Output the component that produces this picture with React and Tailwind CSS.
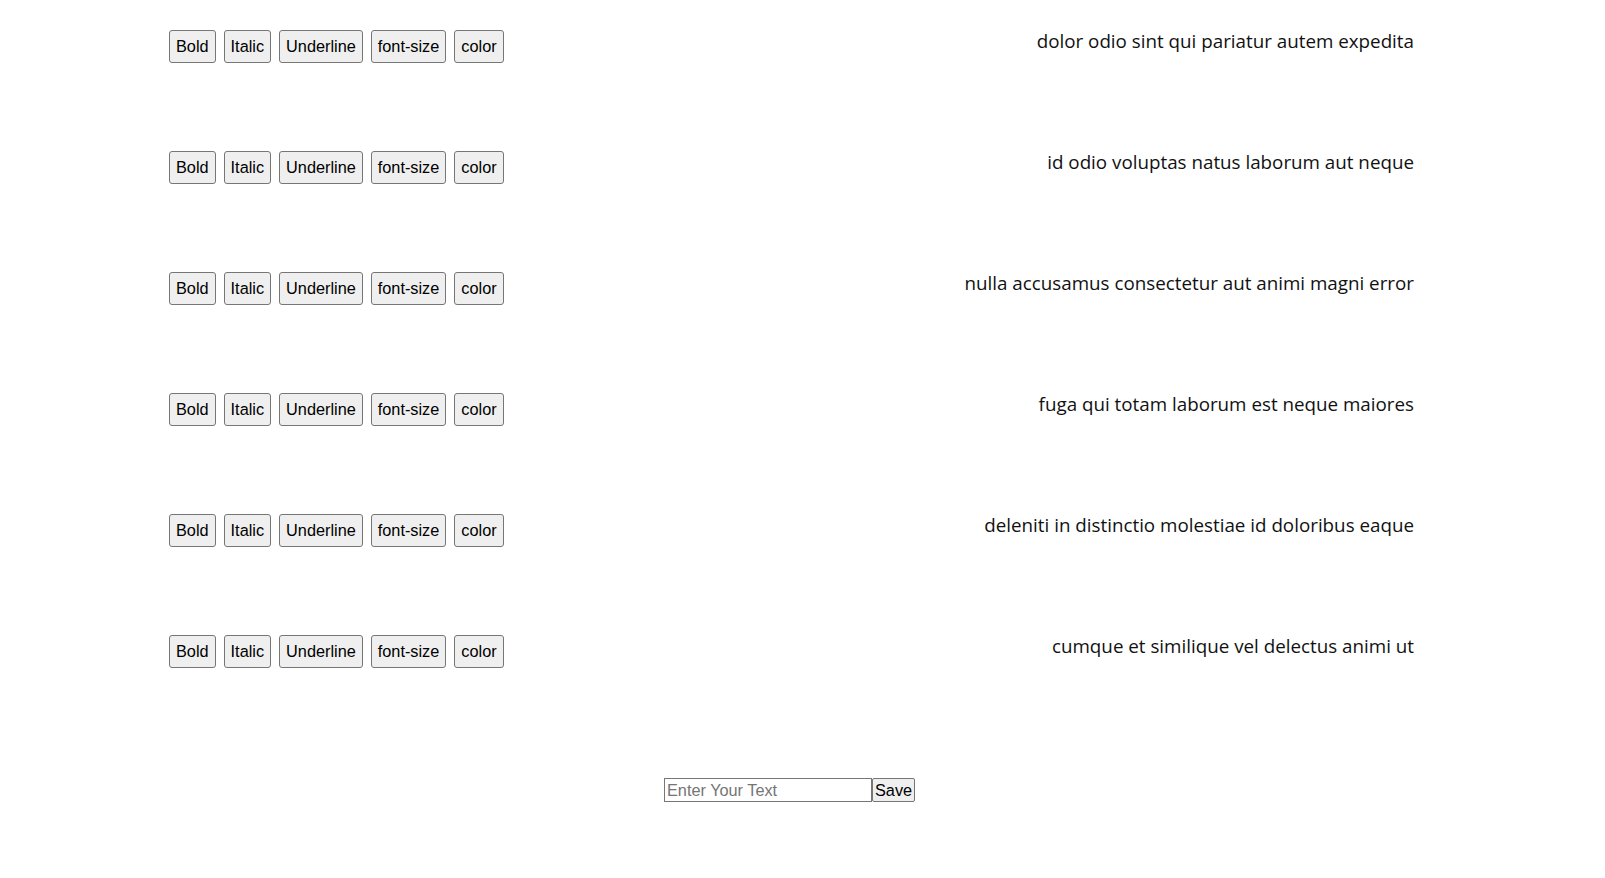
import React from "react";

const rows = [
  "dolor odio sint qui pariatur autem expedita",
  "id odio voluptas natus laborum aut neque",
  "nulla accusamus consectetur aut animi magni error",
  "fuga qui totam laborum est neque maiores",
  "deleniti in distinctio molestiae id doloribus eaque",
  "cumque et similique vel delectus animi ut",
];

const tools = ["Bold", "Italic", "Underline", "font-size", "color"];

export default function App() {
  return (
    <div className="w-[1605px] min-h-[878px] bg-white pt-[30px]">
      {rows.map((text, i) => (
        <div key={i} className="flex justify-between items-start h-[121px] pl-[169px] pr-[191px]">
          <div className="flex gap-[8px]">
            {tools.map((t) => (
              <button
                key={t}
                className="h-[33px] px-[6px] bg-[#efefef] border border-[#767676] rounded-[3px] text-[16.3px] leading-[19px] text-black"
                style={{ fontFamily: '"Liberation Sans", Arial, sans-serif' }}
              >
                {t}
              </button>
            ))}
          </div>
          <p
            className="-mt-[2px] text-[18.8px] leading-[26px] text-[#111]"
            style={{ fontFamily: '"Open Sans", "Noto Sans", sans-serif' }}
          >
            {text}
          </p>
        </div>
      ))}
      <div className="flex pl-[664px] pt-[22px]" style={{ fontFamily: '"Liberation Sans", Arial, sans-serif' }}>
        <input
          placeholder="Enter Your Text"
          className="w-[208px] h-[24px] border border-[#767676] px-[2px] text-[16.3px] text-black placeholder:text-[#757575] outline-none"
        />
        <button className="h-[24px] px-[2px] bg-[#efefef] border border-[#767676] rounded-[2px] text-[16.3px] leading-[19px] text-black">
          Save
        </button>
      </div>
    </div>
  );
}
